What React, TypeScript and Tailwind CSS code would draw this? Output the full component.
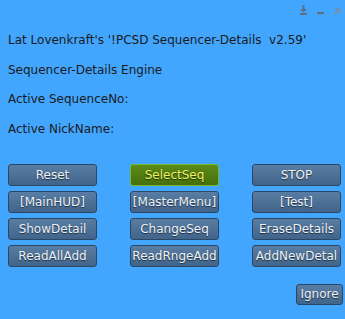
const buttons = [
  "Reset", "SelectSeq", "STOP",
  "[MainHUD]", "[MasterMenu]", "[Test]",
  "ShowDetail", "ChangeSeq", "EraseDetails",
  "ReadAllAdd", "ReadRngeAdd", "AddNewDetal",
];

function Btn({ label }: { label: string }) {
  const active = label === "SelectSeq";
  return (
    <button
      className={
        active
          ? "h-[22px] rounded-[3px] border border-[#79b62a] bg-gradient-to-b from-[#5c8a18] to-[#466f0c] text-[12px] text-[#f0ee6a] [text-shadow:0_1px_1px_#1f3305]"
          : "h-[22px] rounded-[3px] border border-[#2b4766] bg-gradient-to-b from-[#5a7ea3] to-[#41648a] text-[12px] text-[#eef2f6] [text-shadow:0_1px_1px_#1c2c40]"
      }
    >
      {label}
    </button>
  );
}

export default function App() {
  return (
    <div className="w-[345px] h-[319px] bg-[#42a6fe] font-['DejaVu_Sans',sans-serif] text-[#1a1a1a] relative">
      <div className="absolute left-[300px] top-[5px] flex items-start gap-[10px]">
        <svg width="7" height="10" viewBox="0 0 7 10">
          <rect x="2.5" y="0" width="2" height="4" fill="#5f6e80" />
          <path d="M0 4 L7 4 L3.5 7.5 Z" fill="#5f6e80" />
          <rect x="0" y="8" width="7" height="2" fill="#5f6e80" />
        </svg>
        <svg width="7" height="10" viewBox="0 0 7 10">
          <rect x="0" y="7" width="7" height="2" fill="#5f6e80" />
        </svg>
        <svg width="7" height="10" viewBox="0 0 7 10">
          <path d="M0.5 2.5 L6.5 8.5 M6.5 2.5 L0.5 8.5" stroke="#7d8a9a" strokeWidth="1.5" />
        </svg>
      </div>

      <div className="pl-[8px] pt-[31px] text-[12px] leading-[18px] flex flex-col gap-[11.5px]">
        <div>Lat Lovenkraft's '!PCSD Sequencer-Details&nbsp; v2.59'</div>
        <div>Sequencer-Details Engine</div>
        <div>Active SequenceNo:</div>
        <div>Active NickName:</div>
      </div>

      <div className="absolute left-[8px] top-[164px] grid grid-cols-[89px_89px_89px] gap-x-[33px] gap-y-[5px]">
        {buttons.map((b) => (
          <Btn key={b} label={b} />
        ))}
      </div>

      <div className="absolute left-[296px] top-[281px]">
        <button className="h-[21px] w-[47px] rounded-[3px] border border-[#2b4766] bg-gradient-to-b from-[#5a7ea3] to-[#41648a] text-[12px] text-[#eef2f6] [text-shadow:0_1px_1px_#1c2c40]">
          Ignore
        </button>
      </div>
    </div>
  );
}
